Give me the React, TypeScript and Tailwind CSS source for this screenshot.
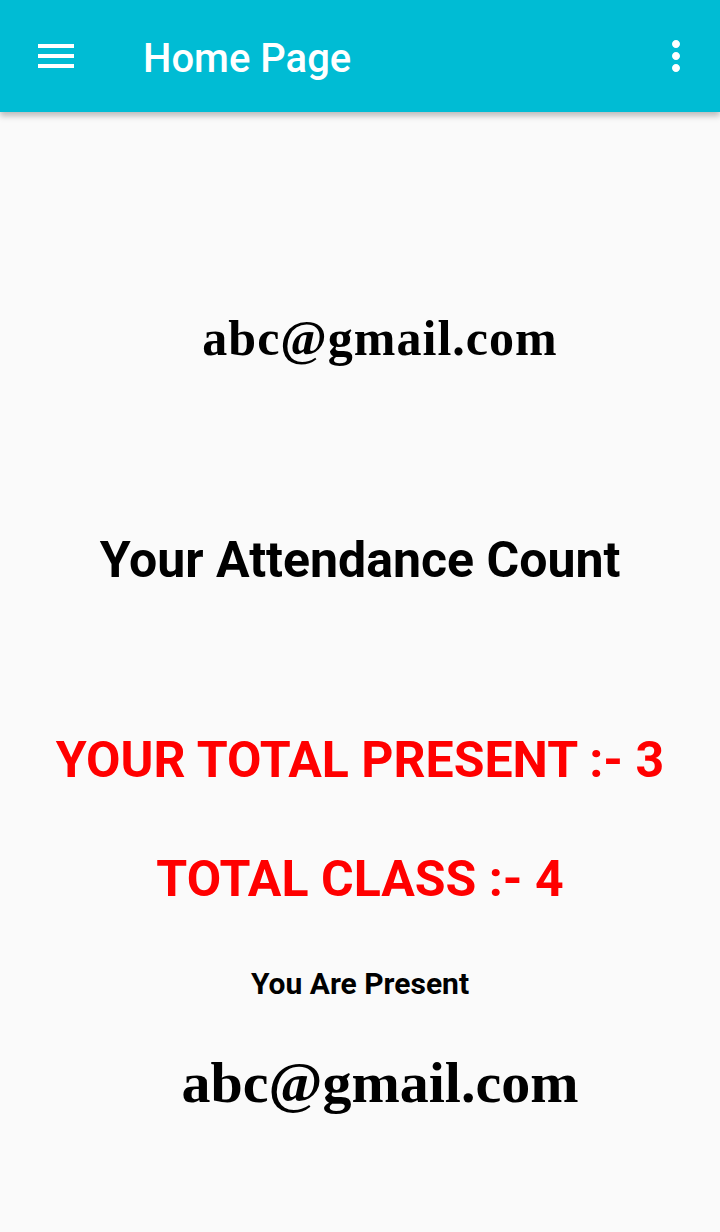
export default function App() {
  return (
    <div className="min-h-[1232px] bg-[#fafafa] font-['Roboto',sans-serif]">
      {/* Toolbar */}
      <div className="h-[112px] bg-[#00bcd4] flex items-center pl-8 pr-5 shadow-[0_4px_6px_rgba(0,0,0,0.25)] relative">
        <svg viewBox="0 0 24 24" className="w-12 h-12 fill-white">
          <path d="M3 18h18v-2H3v2zm0-5h18v-2H3v2zm0-7v2h18V6H3z" />
        </svg>
        <h1 className="ml-[63px] mt-[6px] text-[40px] font-medium text-white flex-1 leading-none">Home Page</h1>
        <svg viewBox="0 0 24 24" className="w-12 h-12 fill-white">
          <path d="M12 8c1.1 0 2-.9 2-2s-.9-2-2-2-2 .9-2 2 .9 2 2 2zm0 2c-1.1 0-2 .9-2 2s.9 2 2 2 2-.9 2-2-.9-2-2-2zm0 6c-1.1 0-2 .9-2 2s.9 2 2 2 2-.9 2-2-.9-2-2-2z" />
        </svg>
      </div>

      {/* Content */}
      <div className="flex flex-col items-center text-center">
        <p className="mt-[196px] ml-[40px] font-['Liberation_Serif',serif] font-bold text-[50px] tracking-[1px] leading-[60px] text-black">
          abc@gmail.com
        </p>
        <h2 className="mt-[162px] text-[50px] font-bold leading-[60px] text-black">Your Attendance Count</h2>
        <p className="mt-[140px] text-[50px] font-bold leading-[60px] text-[#ff0000]">YOUR TOTAL PRESENT :- 3</p>
        <p className="mt-[59px] text-[50px] font-bold leading-[60px] text-[#ff0000]">TOTAL CLASS :- 4</p>
        <p className="mt-[57px] text-[30px] font-bold leading-[36px] text-black">You Are Present</p>
        <p className="mt-[51px] ml-[40px] font-['Liberation_Serif',serif] font-bold text-[58px] leading-[60px] text-black">
          abc@gmail.com
        </p>
      </div>
    </div>
  );
}
